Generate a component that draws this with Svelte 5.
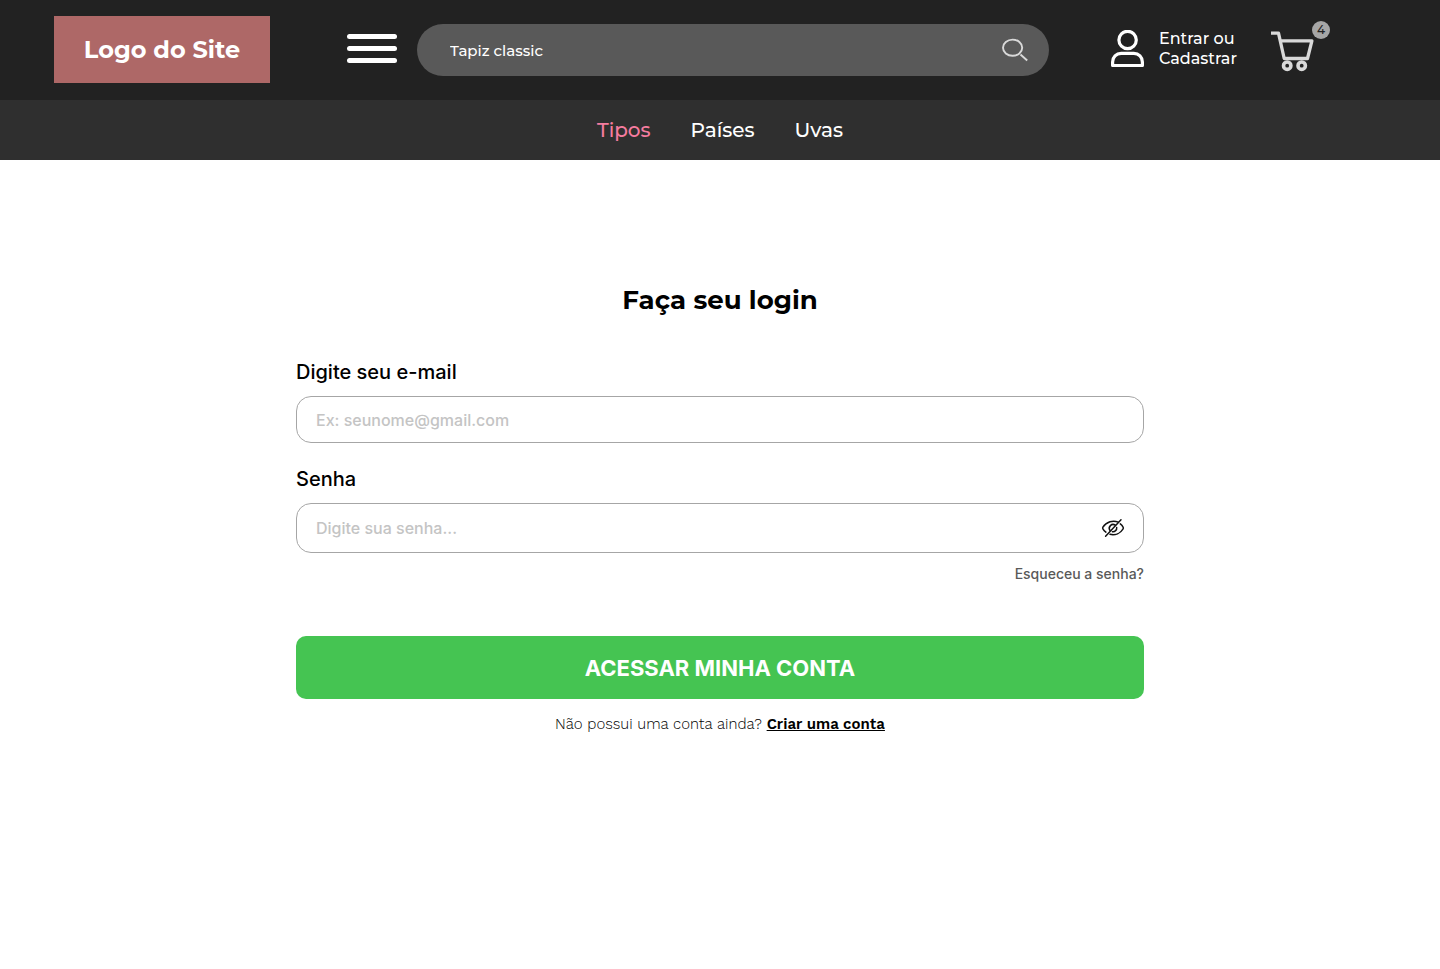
<script>
  let email = $state('');
  let password = $state('');
  let visible = $state(false);
  const cartCount = 4;
  const categories = [
    { name: 'Tipos', active: true },
    { name: 'Países', active: false },
    { name: 'Uvas', active: false }
  ];
</script>

<header>
  <div class="topbar">
    <a class="logo" href="#inicio">Logo do Site</a>
    <button class="menu" type="button" aria-label="Menu">
      <span></span><span></span><span></span>
    </button>
    <form class="search" role="search" onsubmit={(e) => e.preventDefault()}>
      <input type="search" aria-label="Buscar" placeholder="Tapiz classic" />
      <button type="submit" aria-label="Pesquisar">
        <svg width="26" height="24" viewBox="0 0 26 24" fill="none" stroke="#d9d9d9" stroke-width="1.9">
          <ellipse cx="10.6" cy="9.7" rx="9.6" ry="8.1" />
          <path d="M18.5 16.5 25.2 22.5" />
        </svg>
      </button>
    </form>
    <a class="account" href="#entrar">
      <svg width="33" height="38" viewBox="0 0 33 38" fill="none" stroke="#fff" stroke-width="3.2">
        <circle cx="16.6" cy="10" r="8.7" />
        <path d="M1.6 35.5V32C1.6 27 5.2 23.3 10.2 23.3H22.8C27.8 23.3 31.4 27 31.4 32V35.5Z" stroke-linejoin="round" />
      </svg>
      <span>Entrar ou<br />Cadastrar</span>
    </a>
    <a class="cart" href="#carrinho" aria-label="Carrinho">
      <svg width="43" height="41" viewBox="0 0 43 41" fill="none" stroke="#d9d9d9" stroke-width="3.3">
        <path d="M0 2.2H7.5L13.2 27.5H36.5L40.9 9.8H9.3" stroke-linejoin="round" />
        <circle cx="16.2" cy="34.7" r="3.7" stroke-width="3.6" />
        <circle cx="30.7" cy="34.7" r="3.7" stroke-width="3.6" />
      </svg>
      <span class="badge">{cartCount}</span>
    </a>
  </div>
  <nav aria-label="Categorias">
    {#each categories as category}
      <a class:active={category.active} href="#{category.name}">{category.name}</a>
    {/each}
  </nav>
</header>

<main>
  <h1>Faça seu login</h1>
  <form onsubmit={(e) => e.preventDefault()}>
    <label for="email">Digite seu e-mail</label>
    <div class="field">
      <input id="email" type="email" placeholder="Ex: seunome@gmail.com" bind:value={email} />
    </div>
    <label for="password">Senha</label>
    <div class="field tall">
      <input id="password" type={visible ? 'text' : 'password'} placeholder="Digite sua senha..." bind:value={password} />
      <button type="button" aria-label="Mostrar senha" onclick={() => (visible = !visible)}>
        <svg width="24" height="20" viewBox="0 0 24 20" fill="none" stroke="#111" stroke-width="1.5" stroke-linecap="round" stroke-linejoin="round">
          <path d="M17.3 4.1C12 1.9 5.4 3.6 1.9 9.2Q1.4 10 1.9 10.8C2.7 12.1 3.7 13.2 4.9 14.1" />
          <path d="M19.3 5.9C20.5 6.8 21.4 7.9 22.1 9.2Q22.6 10 22.1 10.8C19.4 15.3 14.2 17.5 9 16.3" />
          <path d="M14.3 7.2A3.8 3.8 0 0 0 9 12.5" />
          <path d="M15.7 9.5A3.8 3.8 0 0 1 11.4 13.7" />
          <path d="M20 1.8 4.6 18.2" />
        </svg>
      </button>
    </div>
    <a class="forgot" href="#recuperar">Esqueceu a senha?</a>
    <button class="submit" type="submit">ACESSAR MINHA CONTA</button>
  </form>
  <p>Não possui uma conta ainda? <a href="#cadastro">Criar uma conta</a></p>
</main>

<style>
  :global(body) {
    background: #fff;
    color: #000;
    font-family: Inter, sans-serif;
  }
  a {
    color: inherit;
    text-decoration: none;
  }
  button {
    padding: 0;
    border: 0;
    background: none;
    font: inherit;
    cursor: pointer;
  }
  input {
    flex: 1;
    min-width: 0;
    padding: 0;
    border: 0;
    outline: 0;
    background: none;
    font: inherit;
    color: inherit;
  }
  svg {
    display: block;
    flex: none;
  }
  header {
    color: #fff;
    font-family: Montserrat, Inter, sans-serif;
  }
  .topbar {
    display: flex;
    align-items: center;
    box-sizing: border-box;
    height: 100px;
    padding: 0 126px 0 54px;
    background: #222;
  }
  .logo {
    display: flex;
    align-items: center;
    justify-content: center;
    flex: none;
    width: 216px;
    height: 67px;
    margin-bottom: 2px;
    background: #ae6867;
    font-size: 24px;
    font-weight: 700;
  }
  .menu {
    display: flex;
    flex-direction: column;
    flex: none;
    gap: 7px;
    width: 50px;
    margin: 0 20px 3px 77px;
  }
  .menu span {
    height: 5px;
    border-radius: 3px;
    background: #fff;
  }
  .search {
    display: flex;
    align-items: center;
    flex: 1;
    box-sizing: border-box;
    min-width: 0;
    height: 52px;
    padding: 0 21px 0 33px;
    border-radius: 26px;
    background: #595959;
    font-size: 15px;
    font-weight: 500;
  }
  .search input::placeholder {
    color: #fff;
    opacity: 1;
  }
  .account {
    display: flex;
    align-items: center;
    flex: none;
    gap: 15px;
    width: 126px;
    margin: 0 34px 2px 62px;
    font-size: 16px;
    line-height: 20px;
    font-weight: 500;
  }
  .cart {
    position: relative;
    flex: none;
    margin-top: 2px;
  }
  .badge {
    position: absolute;
    top: -10px;
    right: -16px;
    width: 18px;
    height: 18px;
    border-radius: 50%;
    background: #a6a6a6;
    color: #222;
    font-size: 12px;
    line-height: 18px;
    font-weight: 500;
    text-align: center;
  }
  nav {
    display: flex;
    align-items: center;
    justify-content: center;
    gap: 40px;
    height: 60px;
    background: #2f2f2f;
    font-size: 20px;
    font-weight: 500;
  }
  .active {
    color: #f57c9f;
  }
  main {
    box-sizing: border-box;
    max-width: 848px;
    margin: 0 auto;
    padding: 124px 0 40px;
  }
  h1 {
    margin: 0 0 44px;
    font: 700 26px/32px Montserrat, Inter, sans-serif;
    text-align: center;
  }
  form {
    display: flex;
    flex-direction: column;
  }
  form.search {
    flex-direction: row;
  }
  label {
    margin-bottom: 12px;
    font-size: 20px;
    line-height: 24px;
    font-weight: 500;
    align-self: flex-start;
  }
  .field {
    display: flex;
    align-items: center;
    box-sizing: border-box;
    height: 47px;
    margin-bottom: 24px;
    padding: 0 18px 0 19px;
    border: 1px solid #a6a6a6;
    border-radius: 15px;
    font-size: 16px;
    font-weight: 500;
  }
  .field.tall {
    height: 50px;
    margin-bottom: 12px;
  }
  .field input::placeholder {
    color: #c4c4c4;
    opacity: 1;
  }
  .forgot {
    align-self: flex-end;
    color: #595959;
    font-size: 14px;
    line-height: 18px;
    font-weight: 500;
  }
  .submit {
    height: 63px;
    margin-top: 53px;
    border-radius: 10px;
    background: #45c452;
    color: #fff;
    font-size: 22px;
    font-weight: 700;
  }
  p {
    margin: 15px 0 0;
    font: 300 15px/20px 'Work Sans', Inter, sans-serif;
    text-align: center;
  }
  p a {
    font-weight: 600;
    text-decoration: underline;
    text-decoration-thickness: 1px;
  }
</style>
